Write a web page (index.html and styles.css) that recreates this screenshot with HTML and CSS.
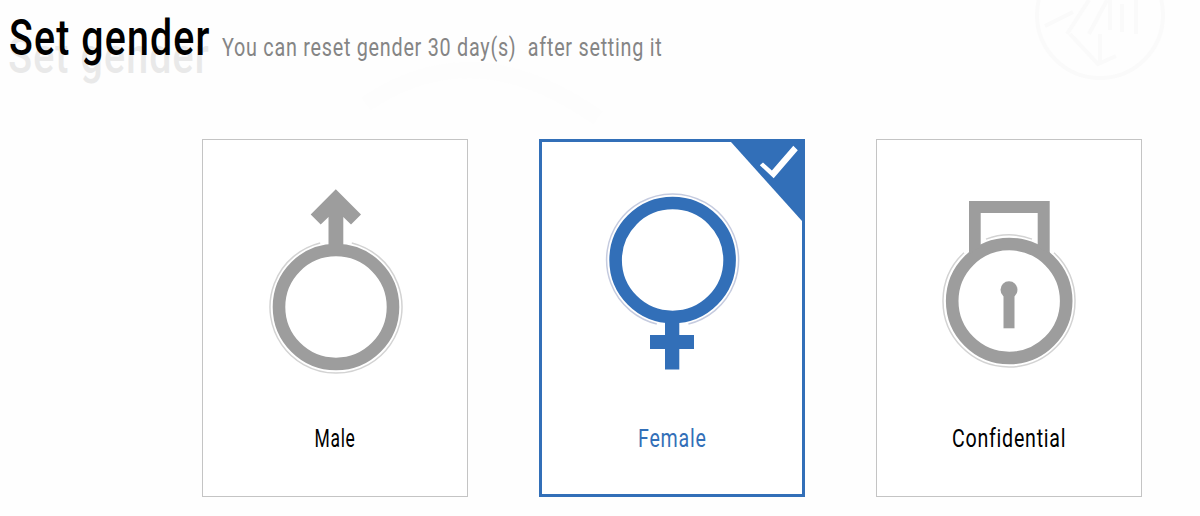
FILE: index.html
```html
<!DOCTYPE html>
<html lang="en">

<head>
    <meta charset="UTF-8">
    <meta name="viewport" content="width=device-width, initial-scale=1.0">
    <title>Set gender</title>
    <link rel="stylesheet" href="styles.css">
</head>

<body>
    <svg class="backdrop" viewBox="0 0 1200 516" aria-hidden="true">
        <circle cx="1100" cy="15" r="63" />
        <path d="M1045 26l28-14M1067 34l22-34M1089 34l18-34M1110 0v30M1122 4v28M1136 0v34M1100 34v30M1070 34l28 30 18-8" />
        <path class="wide" d="M366 104Q475 30 598 118" />
    </svg>

    <header class="title">
        <h1>Set gender</h1>
        <p>You can reset gender 30 day(s)&nbsp; after setting it</p>
    </header>

    <main class="options">
        <div class="option">
            <svg class="icon" viewBox="0 0 140 190">
                <path class="halo" d="M55.2 58A66 66 0 1 0 86.8 58" />
                <circle class="ring" cx="71" cy="122" r="57" />
                <path class="fill" d="M70.8 4.3L96 29.5L86 39.5L78.3 32V62H63.5V32L55.7 39.5L45.7 29.5Z" />
            </svg>
            <span class="label male">Male</span>
        </div>

        <div class="option selected">
            <svg class="icon" viewBox="0 0 140 190">
                <path class="halo" d="M54.8 139A66 66 0 1 1 86.4 139" />
                <circle class="ring" cx="70.6" cy="75" r="57" />
                <path class="fill" d="M63 134H77.3V150H92V164H77.3V184.5H63V164H48V150H63Z" />
            </svg>
            <span class="label female">Female</span>
            <svg class="corner" viewBox="0 0 72 79">
                <path class="triangle" d="M1 0H72V79Z" />
                <path class="check" d="M29.8 23.2L33 20.4L41.9 28.4L63.3 3.7L67.8 8.2L43.7 36.3Z" />
            </svg>
        </div>

        <div class="option">
            <svg class="icon" viewBox="0 0 140 190">
                <path class="halo" d="M25 67.7A66 66 0 1 0 115 67.7M47 54.1A66 66 0 0 1 93 54.1" />
                <circle class="ring" cx="70.2" cy="116" r="57" />
                <path class="fill" d="M30 69V16H110.7V69L98.7 62V28H41.7V62Z" />
                <circle class="fill" cx="70" cy="104.7" r="8.5" />
                <path class="fill" d="M64.5 108H75.5V143.3H64.5Z" />
            </svg>
            <span class="label confidential">Confidential</span>
        </div>
    </main>
</body>

</html>
```
FILE: styles.css
```css
* {
    margin: 0;
    padding: 0;
    box-sizing: border-box;
}

body {
    position: relative;
    height: 516px;
    overflow: hidden;
    background-color: #fefefe;
    font-family: Roboto, "Liberation Sans", sans-serif;
    font-variant-ligatures: none;
}

.backdrop {
    position: absolute;
    top: 0;
    left: 0;
    width: 1200px;
    height: 516px;
    z-index: -1;
    fill: none;
    stroke: #fafafa;
    stroke-width: 4;
}

.backdrop .wide {
    stroke: #fdfdfd;
    stroke-width: 16;
}

.title {
    display: flex;
    align-items: baseline;
    height: 139px;
    padding: 8px 0 0 9px;
}

.title h1 {
    width: 213px;
    font-size: 50px;
    line-height: 60px;
    font-weight: 500;
    letter-spacing: 1.5px;
    color: #000;
    white-space: nowrap;
    text-shadow: -1px 18px 0 #e9e9e9;
    transform: scaleX(.785);
    transform-origin: left;
}

.title p {
    font-size: 26.5px;
    letter-spacing: 1px;
    color: #858585;
    white-space: nowrap;
    transform: translateY(1px) scaleX(.746);
    transform-origin: left;
}

.options {
    display: grid;
    grid-template-columns: repeat(3, 266px);
    column-gap: 71px;
    padding-left: 202px;
}

.option {
    position: relative;
    display: flex;
    flex-direction: column;
    align-items: center;
    height: 358px;
    padding-top: 45px;
    border: 1px solid #c4c4c4;
    background-color: #fff;
    color: #9d9d9d;
    cursor: pointer;
}

.option.selected {
    padding-top: 43px;
    border: 3px solid #326fb8;
    color: #326fb8;
}

.icon {
    width: 140px;
    height: 190px;
}

.fill {
    fill: currentColor;
}

.ring {
    fill: none;
    stroke: currentColor;
    stroke-width: 12.6;
}

.halo {
    fill: none;
    stroke: #d3d3d3;
    stroke-width: 1.5;
}

.selected .halo {
    stroke: #c5cbdf;
}

.label {
    margin-top: 47px;
    font-size: 26.5px;
    line-height: 32px;
    letter-spacing: 1px;
    color: #000;
    transform: scaleX(.74);
}

.label.male {
    transform: scaleX(.66);
}

.selected .label {
    color: #326fb8;
}

.corner {
    position: absolute;
    top: 0;
    right: 0;
    width: 72px;
    height: 79px;
}

.triangle {
    fill: #326fb8;
}

.check {
    fill: #fff;
}
```
